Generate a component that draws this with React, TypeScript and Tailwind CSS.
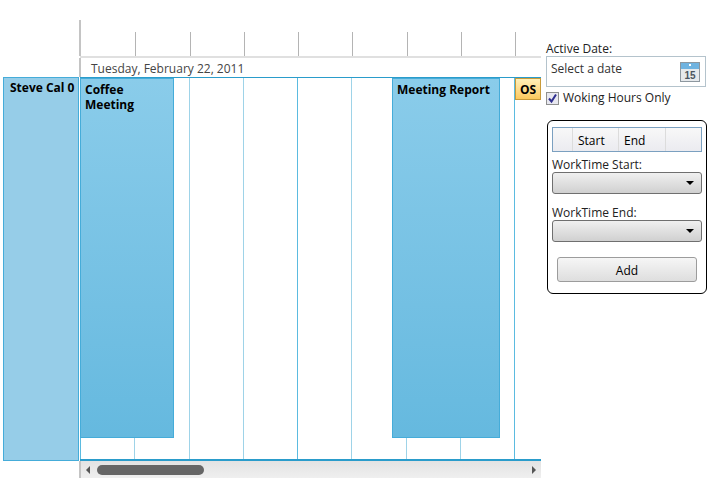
const font = "font-['Open_Sans',sans-serif]";
const cells = [0, 1, 2, 3, 4, 5, 6, 7, 8];

const CalendarIcon = () => (
  <svg width="20" height="20" viewBox="0 0 20 20">
    <rect x="0.5" y="0.5" width="19" height="19" fill="#e6e9ec" stroke="#8d979f" />
    <rect x="1" y="1" width="18" height="6" fill="#6fb3e0" />
    <rect x="9" y="2" width="2" height="2" fill="#fff" />
    <text x="10" y="17" textAnchor="middle" fontSize="10" fontWeight="700" fill="#4b5560" fontFamily="'Liberation Sans',sans-serif">15</text>
  </svg>
);

const Combo = () => (
  <div className="h-[22px] rounded-[3px] border border-[#6f6f6f] bg-gradient-to-b from-[#f0f0f0] to-[#d0d0d0] flex items-center justify-end pr-[7px]">
    <div className="w-0 h-0 border-l-[4px] border-r-[4px] border-t-[4px] border-l-transparent border-r-transparent border-t-black" />
  </div>
);

const App = () => {
  return (
    <div className={`w-[715px] h-[500px] bg-white flex overflow-hidden text-black ${font}`}>
      {/* RESOURCE COLUMN */}
      <div className="w-[79px] shrink-0 pt-[77px] pl-[3px]">
        <div className="h-[384px] bg-[#96cde8] border border-[#45acd9] pl-[6px] pt-[2px] text-[12px] font-bold leading-[16px]">
          Steve Cal 0
        </div>
      </div>

      {/* TIMELINE */}
      <div className="w-[462px] shrink-0 pt-[20px] flex flex-col">
        <div className="h-[36px] border-l-2 border-[#c4c4c4] flex items-end overflow-hidden">
          {cells.map((i) => (
            <div key={i} className="relative w-[54.25px] shrink-0 h-[24px] first:border-l-0 border-l border-[#b4b4b4]">
              {i % 4 !== 0 && <div className="absolute left-0 top-0 h-0 w-0" />}
            </div>
          ))}
        </div>
        <div className="h-[2px] ml-[1px] bg-[#e0e0e0]" />
        <div className="h-[19px] border-l-2 border-[#c4c4c4] pl-[10px] text-[12px] leading-[22px] text-[#444]">
          Tuesday, February 22, 2011
        </div>
        <div className="relative h-[384px] ml-[1px] border-t border-b-2 border-[#2a9ccb] flex overflow-hidden">
          {cells.map((i) => (
            <div key={i} className={`w-[54.25px] shrink-0 border-l ${i % 4 === 0 ? "border-[#5bbbe0]" : "border-[#9ed3e8]"}`} />
          ))}
          <div className="absolute left-0 top-0 w-[94px] h-[360px] bg-gradient-to-b from-[#8accea] to-[#65b9df] border border-[#45acd9] pl-[4px] pt-[3px] text-[12px] font-bold leading-[15px]">
            Coffee<br />Meeting
          </div>
          <div className="absolute left-[312px] top-0 w-[108px] h-[360px] bg-gradient-to-b from-[#8accea] to-[#65b9df] border border-[#45acd9] pl-[4px] pt-[3px] text-[12px] font-bold leading-[15px]">
            Meeting Report
          </div>
          <div className="absolute left-[435px] top-0 w-[26px] h-[22px] bg-gradient-to-b from-[#fff0b8] to-[#fcc95c] border border-[#c89a3a] pl-[4px] pt-[3px] text-[12px] font-bold leading-[15px] overflow-hidden">
            <div className="w-[16px] overflow-hidden">OS</div>
          </div>
        </div>
        <div className="h-[17px] border-l-2 border-[#c4c4c4] bg-gradient-to-b from-[#e3e3e3] to-[#efefef] flex items-center pl-[5px] pr-[5px]">
          <div className="w-0 h-0 border-t-[4px] border-b-[4px] border-r-[4px] border-t-transparent border-b-transparent border-r-[#555]" />
          <div className="ml-[7px] w-[107px] h-[10px] rounded-full bg-[#666]" />
          <div className="ml-auto w-0 h-0 border-t-[4px] border-b-[4px] border-l-[4px] border-t-transparent border-b-transparent border-l-[#555]" />
        </div>
      </div>

      {/* SIDE PANEL */}
      <div className="w-[160px] ml-[5px] shrink-0 pt-[41px] text-[12px]">
        <div className="leading-[15px] text-[#222]">Active Date:</div>
        <div className="h-[31px] border border-[#b4c3cc] flex items-center justify-between pl-[4px] pr-[5px] text-[#333]">
          <span className="-mt-[5px]">Select a date</span>
          <CalendarIcon />
        </div>
        <div className="flex items-center gap-[4px] h-[20px] mt-[1px]">
          <div className="w-[13px] h-[13px] border border-[#8e8f8f] bg-[#e8e8f0] flex items-center justify-center">
            <svg width="11" height="11" viewBox="0 0 11 11">
              <path d="M2 5.5 L4.5 8.5 L9 1.5" fill="none" stroke="#2f2f8f" strokeWidth="2" />
            </svg>
          </div>
          <span className="text-[#222]">Woking Hours Only</span>
        </div>
        <div className="mt-[12px] ml-[1px] w-[160px] h-[174px] rounded-[6px] border border-black px-[4px] pt-[6px]">
          <div className="h-[25px] border border-[#7ba0c0] flex bg-gradient-to-b from-[#f8f8f8] to-[#ebebf0] leading-[25px]">
            <div className="w-[20px] border-r border-[#dcdcdc]" />
            <div className="w-[46px] border-r border-[#dcdcdc] pl-[5px]">Start</div>
            <div className="w-[47px] border-r border-[#dcdcdc] pl-[5px]">End</div>
          </div>
          <div className="mt-[5px] leading-[15px] text-[#222]">WorkTime Start:</div>
          <Combo />
          <div className="mt-[11px] leading-[15px] text-[#222]">WorkTime End:</div>
          <Combo />
          <div className="mx-[5px] mt-[15px] h-[25px] rounded-[3px] border border-[#9c9c9c] bg-gradient-to-b from-[#f6f6f6] to-[#dedede] text-center leading-[26px]">
            Add
          </div>
        </div>
      </div>
    </div>
  );
};

export default App;
